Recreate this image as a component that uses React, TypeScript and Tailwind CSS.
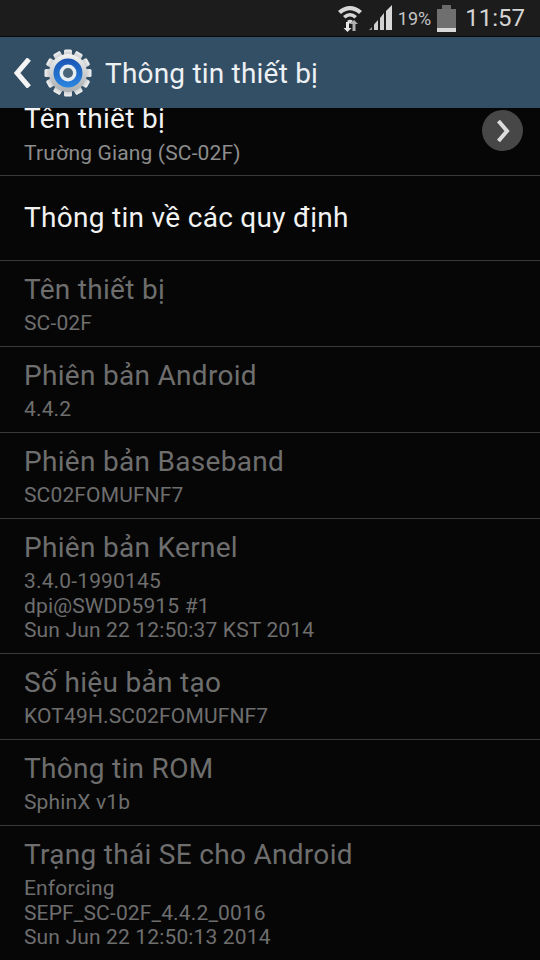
import React from "react";

function Wifi() {
  return (
    <svg width="26" height="32" viewBox="0 0 26 32" className="block">
      <path d="M1 9 Q13 -1 25 9 L22 12 Q13 4.5 4 12 Z" fill="#d8d8d8" />
      <path d="M6 14 Q13 8 20 14 L17.5 16.5 Q13 12.5 8.5 16.5 Z" fill="#d8d8d8" />
      <path d="M10 19 Q13 16.5 16 19 L13 22 Z" fill="#d8d8d8" />
      <path d="M9 20h3v6h2.5l-4 4-4-4H9z" fill="#e8e8e8" />
      <path d="M17 18l4 4h-2.5v7h-3v-7H13z" fill="#b0b0b0" />
    </svg>
  );
}

function Signal() {
  return (
    <svg width="24" height="26" viewBox="0 0 24 26" className="block">
      <path d="M0 25 L3 22 V25Z" fill="#9a9a9a" />
      <path d="M5 25 V19.5 L9 15 V25Z" fill="#d0d0d0" />
      <path d="M11 25 V13 L15 8 V25Z" fill="#d0d0d0" />
      <path d="M17 25 V6 L23 0 V25Z" fill="#d8d8d8" />
    </svg>
  );
}

function Battery() {
  return (
    <div className="ml-[1px] flex w-[19px] flex-col items-center">
      <div className="h-[4px] w-[9px] bg-[#6a6a6a]" />
      <div className="h-[19px] w-[19px] bg-[#6f6f6f]" />
      <div className="h-[4px] w-[19px] bg-[#d8d8d8]" />
    </div>
  );
}

function Gear() {
  const teeth = Array.from({ length: 12 }, (_, i) => i * 30);
  return (
    <svg width="50" height="50" viewBox="0 0 50 50" className="block">
      <defs>
        <linearGradient id="g" x1="0" y1="0" x2="0" y2="1">
          <stop offset="0" stopColor="#f2f2f2" />
          <stop offset="1" stopColor="#a9adb0" />
        </linearGradient>
        <linearGradient id="b" x1="0" y1="0" x2="0" y2="1">
          <stop offset="0" stopColor="#1a55b4" />
          <stop offset="1" stopColor="#2a86e0" />
        </linearGradient>
      </defs>
      {teeth.map((a) => (
        <rect key={a} x="21" y="1.5" width="8" height="9" rx="1.5" fill="url(#g)" transform={`rotate(${a} 25 25)`} />
      ))}
      <circle cx="25" cy="25" r="19" fill="url(#g)" />
      <circle cx="25" cy="25" r="14.5" fill="url(#b)" />
      <circle cx="25" cy="25" r="8.5" fill="#e8edf2" />
      <circle cx="25" cy="25" r="5" fill="#4a6478" />
    </svg>
  );
}

const rows: { title: string; lines: string[] }[] = [
  { title: "Tên thiết bị", lines: ["SC-02F"] },
  { title: "Phiên bản Android", lines: ["4.4.2"] },
  { title: "Phiên bản Baseband", lines: ["SC02FOMUFNF7"] },
  { title: "Phiên bản Kernel", lines: ["3.4.0-1990145", "dpi@SWDD5915 #1", "Sun Jun 22 12:50:37 KST 2014"] },
  { title: "Số hiệu bản tạo", lines: ["KOT49H.SC02FOMUFNF7"] },
  { title: "Thông tin ROM", lines: ["SphinX v1b"] },
  { title: "Trạng thái SE cho Android", lines: ["Enforcing", "SEPF_SC-02F_4.4.2_0016", "Sun Jun 22 12:50:13 2014"] },
];

export default function App() {
  return (
    <div className="flex h-[960px] w-[540px] flex-col overflow-hidden bg-[#060606] font-['Roboto',sans-serif]">
      <div className="flex h-[36px] shrink-0 items-center justify-end gap-[6px] bg-[#1c1c1c] pr-[15px]">
        <Wifi />
        <Signal />
        <span className="ml-[-1px] text-[18px] text-[#c4c4c4]">19%</span>
        <div className="ml-[-1px]">
          <Battery />
        </div>
        <span className="ml-[3px] text-[24px] text-[#d4d4d4]">11:57</span>
      </div>
      <div className="h-[1px] shrink-0 bg-[#0b0b0b]" />
      <div className="flex h-[71px] shrink-0 items-center bg-[#334f66] pl-[14px]">
        <svg width="18" height="30" viewBox="0 0 18 30" className="block">
          <path d="M15 1 L3 15 L15 29" fill="none" stroke="#f4f4f4" strokeWidth="5" />
        </svg>
        <div className="ml-[11px]">
          <Gear />
        </div>
        <span className="ml-[12px] pt-[2px] text-[28px] tracking-[0.2px] text-[#eef1f3]">Thông tin thiết bị</span>
      </div>
      <div className="flex h-[68px] shrink-0 items-center justify-between overflow-hidden border-b border-[#3a3a3a] pl-[24px] pr-[17px]">
        <div className="mt-[-15px]">
          <div className="h-[30px] text-[28px] leading-[30px] tracking-[0.3px] text-[#f2f2f2]">Tên thiết bị</div>
          <div className="mt-[7px] text-[21px] leading-[24px] tracking-[0.15px] text-[#8d8d8d]">Trường Giang (SC-02F)</div>
        </div>
        <div className="mt-[-22px] flex h-[41px] w-[41px] items-center justify-center rounded-full bg-[#474747]">
          <svg width="14" height="24" viewBox="0 0 14 24" className="block">
            <path d="M2.5 2 L11 12 L2.5 22" fill="none" stroke="#dcdcdc" strokeWidth="4" />
          </svg>
        </div>
      </div>
      <div className="flex h-[85px] shrink-0 items-center border-b border-[#3a3a3a] pl-[24px]">
        <span className="text-[28px] tracking-[0.3px] text-[#f2f2f2]">Thông tin về các quy định</span>
      </div>
      {rows.map((r) => (
        <div key={r.title} className="shrink-0 border-b border-[#3a3a3a] pb-[10.5px] pl-[24px] pt-[11px] last:border-b-0">
          <div className="mb-[3px] h-[36px] text-[28px] leading-[36px] tracking-[0.3px] text-[#6e6e6e]">{r.title}</div>
          {r.lines.map((l) => (
            <div key={l} className="text-[21px] leading-[24.5px] tracking-[0.15px] text-[#6e6e6e]">
              {l}
            </div>
          ))}
        </div>
      ))}
    </div>
  );
}
